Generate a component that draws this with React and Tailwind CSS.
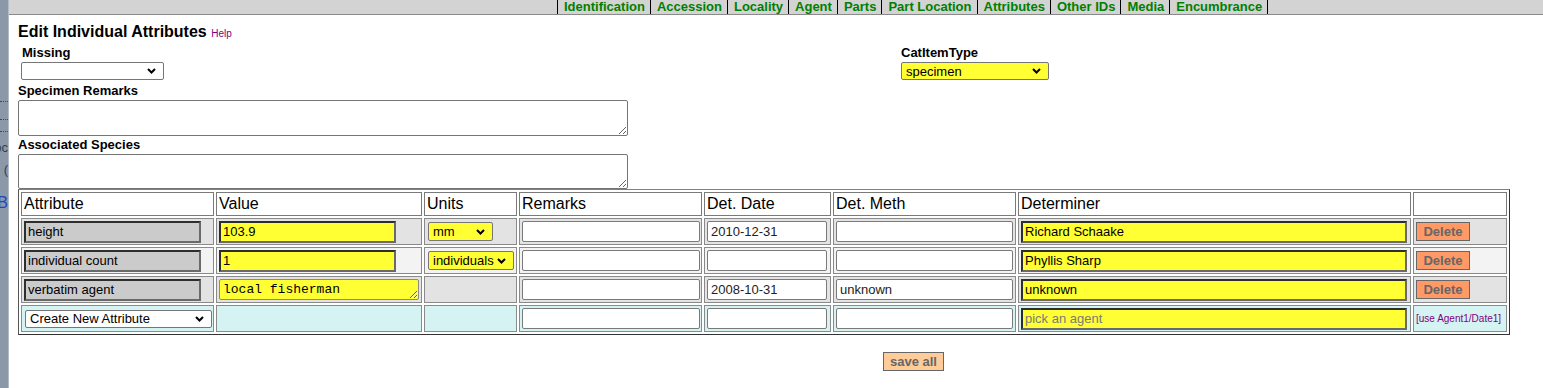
import React from 'react';

const tabs = ['Identification', 'Accession', 'Locality', 'Agent', 'Parts', 'Part Location', 'Attributes', 'Other IDs', 'Media', 'Encumbrance'];

const rows = [
  { attr: 'height', value: '103.9', units: 'mm', unitsW: 'w-[65px]', date: '2010-12-31', meth: '', det: 'Richard Schaake', bg: 'bg-[#e3e3e3]' },
  { attr: 'individual count', value: '1', units: 'individuals', unitsW: 'w-[86px]', date: '', meth: '', det: 'Phyllis Sharp', bg: 'bg-[#f3f3f3]' },
  { attr: 'verbatim agent', value: 'local fisherman', mono: true, units: null, date: '2008-10-31', meth: 'unknown', det: 'unknown', bg: 'bg-[#e3e3e3]' },
];

// inset look used for the readonly / required fields
const inset = 'h-[22px] border-2 border-t-[#2e2e2e] border-l-[#2e2e2e] border-r-[#6a6a6a] border-b-[#6a6a6a] px-[2px] text-[13px] text-black outline-none';
const plain = 'h-[21px] border border-[#7a7a7a] rounded-[2px] bg-white px-[3px] text-[13px] text-[#222] outline-none';
const cell = 'border border-[#8a8a8a] px-[2px] align-middle';

const Chevron = () => (
  <svg width="9" height="6" viewBox="0 0 9 6" className="pointer-events-none absolute right-[8px] top-1/2 -translate-y-1/2">
    <path d="M1 1l3.5 3.5L8 1" fill="none" stroke="#000" strokeWidth="2" />
  </svg>
);

const Select = ({ value, className, bg }) => (
  <span className={`relative block ${className}`}>
    <select
      defaultValue={value}
      className={`block h-full w-full appearance-none rounded-[2px] border border-[#767676] pl-[4px] text-[13px] leading-none text-black outline-none ${bg}`}
    >
      <option value={value}>{value}</option>
    </select>
    <Chevron />
  </span>
);

const Delete = () => (
  <button className="block h-[19px] w-[54px] border border-[#666] bg-[#ff9966] text-[13px] font-bold leading-none text-[#666]">
    Delete
  </button>
);

const App = () => {
  return (
    <div className="flex min-h-[388px] bg-white font-['Liberation_Sans',Arial,sans-serif] text-black">
      {/* clipped sidebar from the parent frame */}
      <div className="flex w-[9px] shrink-0 flex-col overflow-hidden border-r border-[#b3bcc6] bg-[#8b98a8]">
        <div className="mt-[101px] h-px border-t border-dotted border-[#3a4a5a]" />
        <div className="mt-[17px] h-px border-t border-dotted border-[#3a4a5a]" />
        <div className="mt-[11px] h-px border-t border-dotted border-[#3a4a5a]" />
        <div className="mt-[8px] flex justify-end whitespace-nowrap text-[13px] leading-[15px] text-[#34424f]">Doc</div>
        <div className="mt-[7px] flex justify-end whitespace-nowrap text-[13px] leading-[15px] text-[#34424f]">(</div>
        <div className="mt-[17px] flex justify-end whitespace-nowrap text-[16px] leading-[18px] text-[#2044c8]">B</div>
      </div>

      <div className="min-w-0 flex-1">
        {/* tab bar */}
        <div className="flex h-[15px] overflow-hidden border-b border-[#8a8a8a] bg-[#d3d3d3] pl-[548px]">
          {tabs.map((t, i) => (
            <div
              key={t}
              className={`whitespace-nowrap border-l border-black pl-[6px] pr-[5px] text-[13px] font-bold leading-[14px] text-[#008000] ${i === tabs.length - 1 ? 'border-r' : ''}`}
            >
              {t}
            </div>
          ))}
        </div>

        <div className="pl-[9px]">
          <h1 className="mt-[8px] text-[16px] font-bold leading-[18px]">
            Edit Individual Attributes <span className="text-[10px] font-normal text-[#800080]">Help</span>
          </h1>

          <div className="flex">
            <div className="w-[883px]">
              <div className="mt-[2px] pl-[4px] text-[13px] font-bold leading-[15px]">Missing</div>
              <Select value="" className="ml-[3px] mt-[2px] h-[18px] w-[143px]" bg="bg-white" />
            </div>
            <div>
              <div className="mt-[2px] text-[13px] font-bold leading-[15px]">CatItemType</div>
              <Select value="specimen" className="mt-[2px] h-[18px] w-[148px]" bg="bg-[#ffff33]" />
            </div>
          </div>

          <div className="mt-[3px] text-[13px] font-bold leading-[15px]">Specimen Remarks</div>
          <textarea className="mt-[2px] block h-[36px] w-[610px] rounded-[2px] border border-[#767676] bg-white outline-none" />
          <div className="mt-[1px] text-[13px] font-bold leading-[15px]">Associated Species</div>
          <textarea className="mt-[2px] block h-[35px] w-[610px] rounded-[2px] border border-[#767676] bg-white outline-none" />

          <table className="w-[1492px] table-fixed border-separate border-spacing-[2px] border border-t-[#808080] border-l-[#555] border-r-[#333] border-b-[#333]">
            <thead>
              <tr>
                {[
                  ['Attribute', 'w-[193px]'],
                  ['Value', 'w-[206px]'],
                  ['Units', 'w-[93px]'],
                  ['Remarks', 'w-[183px]'],
                  ['Det. Date', 'w-[127px]'],
                  ['Det. Meth', 'w-[183px]'],
                  ['Determiner', 'w-[393px]'],
                  ['', 'w-[94px]'],
                ].map(([h, w]) => (
                  <th key={h} className={`${w} h-[24px] border border-[#7a7a7a] bg-white px-[2px] text-left text-[16px] font-normal leading-[18px]`}>
                    {h}
                  </th>
                ))}
              </tr>
            </thead>
            <tbody>
              {rows.map((r) => (
                <tr key={r.attr}>
                  <td className={`${cell} ${r.bg} h-[27px]`}>
                    <input readOnly defaultValue={r.attr} className={`${inset} block w-[177px] bg-[#cbcbcb]`} />
                  </td>
                  <td className={`${cell} ${r.bg}`}>
                    {r.mono ? (
                      <textarea
                        defaultValue={r.value}
                        rows={1}
                        className="block h-[21px] w-[200px] resize rounded-[2px] border border-[#8a8a8a] bg-[#ffff33] px-[3px] pt-[2px] font-['Liberation_Mono',monospace] text-[13px] leading-[15px] outline-none"
                      />
                    ) : (
                      <input defaultValue={r.value} className={`${inset} block w-[177px] bg-[#ffff33]`} />
                    )}
                  </td>
                  <td className={`${cell} ${r.bg}`}>
                    {r.units && <Select value={r.units} className={`ml-[1px] h-[19px] ${r.unitsW}`} bg="bg-[#ffff33]" />}
                  </td>
                  <td className={`${cell} ${r.bg}`}>
                    <input defaultValue="" className={`${plain} block w-[178px]`} />
                  </td>
                  <td className={`${cell} ${r.bg}`}>
                    <input defaultValue={r.date} className={`${plain} block w-[120px]`} />
                  </td>
                  <td className={`${cell} ${r.bg}`}>
                    <input defaultValue={r.meth} className={`${plain} block w-[177px]`} />
                  </td>
                  <td className={`${cell} ${r.bg}`}>
                    <input defaultValue={r.det} className={`${inset} block w-[386px] bg-[#ffff33]`} />
                  </td>
                  <td className={`${cell} ${r.bg}`}>
                    <Delete />
                  </td>
                </tr>
              ))}
              <tr>
                <td className={`${cell} h-[27px] bg-[#d6f3f3]`}>
                  <Select value="Create New Attribute" className="ml-[1px] h-[18px] w-[187px]" bg="bg-white" />
                </td>
                <td className={`${cell} bg-[#d6f3f3]`} />
                <td className={`${cell} bg-[#d6f3f3]`} />
                <td className={`${cell} bg-[#d6f3f3]`}>
                  <input defaultValue="" className={`${plain} block w-[178px]`} />
                </td>
                <td className={`${cell} bg-[#d6f3f3]`}>
                  <input defaultValue="" className={`${plain} block w-[120px]`} />
                </td>
                <td className={`${cell} bg-[#d6f3f3]`}>
                  <input defaultValue="" className={`${plain} block w-[177px]`} />
                </td>
                <td className={`${cell} bg-[#d6f3f3]`}>
                  <input placeholder="pick an agent" className={`${inset} block w-[386px] bg-[#ffff33] placeholder:text-[#7a7a7a]`} />
                </td>
                <td className={`${cell} bg-[#d6f3f3] whitespace-nowrap text-[10px] text-[#800080]`}>[use Agent1/Date1]</td>
              </tr>
            </tbody>
          </table>

          <button className="ml-[865px] mt-[17px] h-[19px] border border-[#666] bg-[#ffcc99] px-[6px] text-[13px] font-bold leading-none text-[#666]">
            save all
          </button>
        </div>
      </div>
    </div>
  );
};

export default App;
